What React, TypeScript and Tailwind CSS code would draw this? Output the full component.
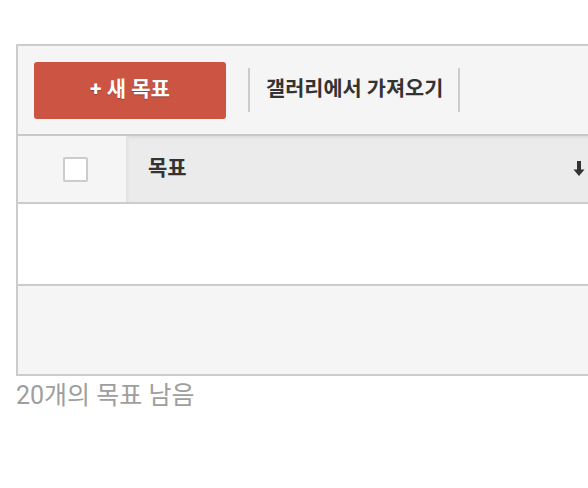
const font = "font-['Roboto','Noto_Sans_CJK_KR',sans-serif]"

function SortArrow() {
  return (
    <svg width="12" height="16" viewBox="0 0 12 16" className="shrink-0">
      <rect x="4" y="0" width="4" height="9" fill="#333" />
      <path d="M0.5 8.5 H11.5 L6 15 Z" fill="#333" />
    </svg>
  )
}

export default function App() {
  return (
    <div className={`h-[488px] w-[588px] overflow-hidden bg-white ${font}`}>
      <div className="ml-4 mt-11 w-[640px]">
        <div className="border-2 border-[#ccc]">
          {/* toolbar */}
          <div className="flex h-[88px] items-center bg-[#f5f5f5] px-4">
            <button
              type="button"
              className="flex h-[57px] w-[192px] items-center justify-center rounded-[3px] bg-[#cc5442] text-[21px] font-bold text-white [text-shadow:0_1px_1px_rgba(0,0,0,0.25)]"
            >
              + 새 목표
            </button>
            <div className="ml-[22px] h-[44px] w-[2px] bg-[#ccc]" />
            <span className="ml-4 text-[20.8px] font-bold text-[#333]">갤러리에서 가져오기</span>
            <div className="ml-[15px] h-[44px] w-[2px] bg-[#ccc]" />
          </div>

          {/* header */}
          <div className="flex h-[70px] border-t-2 border-b-2 border-t-[#c8c8c8] border-b-[#ccc]">
            <div className="flex w-[110px] items-center justify-center border-r-2 border-[#e4e4e4] bg-[#f5f5f5] pl-[6px]">
              <div className="h-[25px] w-[25px] rounded-[2px] border-2 border-[#ccc] bg-white" />
            </div>
            <div className="flex flex-1 items-center bg-[#ebebeb] pl-5 pr-[69px] shadow-[inset_0_2px_3px_rgba(0,0,0,0.06)]">
              <span className="flex-1 text-[21px] font-bold text-[#333]">목표</span>
              <SortArrow />
            </div>
          </div>

          {/* rows */}
          <div className="h-[82px] border-b-2 border-[#ccc] bg-white" />
          <div className="h-[88px] bg-[#f5f5f5]" />
        </div>
        <p className="mt-[4px] text-[25px] leading-[32px] text-[#9e9e9e]">20개의 목표 남음</p>
      </div>
    </div>
  )
}
